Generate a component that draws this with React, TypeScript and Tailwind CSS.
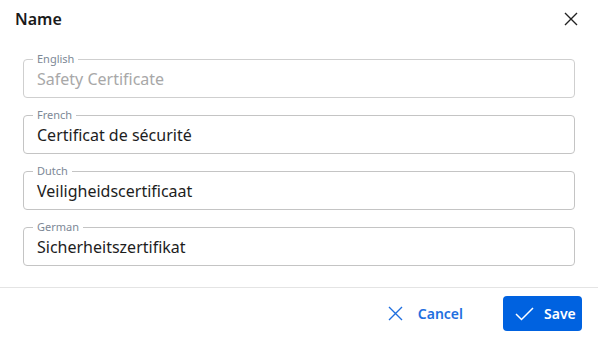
import React from "react";

const fields = [
  { label: "English", value: "Safety Certificate", disabled: true },
  { label: "French", value: "Certificat de sécurité" },
  { label: "Dutch", value: "Veiligheidscertificaat" },
  { label: "German", value: "Sicherheitszertifikat" },
];

function Field({ label, value, disabled }: { label: string; value: string; disabled?: boolean }) {
  return (
    <div
      className={`relative h-[39px] rounded-[4px] border flex items-center px-[13px] ${
        disabled ? "border-[#cfcfcf]" : "border-[#c4c4c4]"
      }`}
    >
      <span className="absolute left-[9px] top-[-8px] bg-white px-[4px] text-[11px] leading-[14px] text-[#7d8896]">
        {label}
      </span>
      <span className={`text-[16px] leading-[20px] pt-[1px] ${disabled ? "text-[#a8a8a8]" : "text-[#1d1d1d]"}`}>
        {value}
      </span>
    </div>
  );
}

export default function App() {
  return (
    <div
      className="w-[598px] h-[340px] bg-white flex flex-col"
      style={{ fontFamily: "'Noto Sans', Roboto, sans-serif" }}
    >
      <div className="h-[38px] flex items-center justify-between pl-[15px] pr-[20px]">
        <span className="text-[16px] font-semibold text-[#1a1a1a]">Name</span>
        <svg width="14" height="14" viewBox="0 0 14 14" className="text-[#222]">
          <path d="M1 1L13 13M13 1L1 13" stroke="currentColor" strokeWidth="1.4" fill="none" />
        </svg>
      </div>
      <div className="flex flex-col gap-[17px] px-[23px] pt-[21px] pb-[21px]">
        {fields.map((f) => (
          <Field key={f.label} {...f} />
        ))}
      </div>
      <div className="border-t border-[#e4e4e4]" />
      <div className="flex items-center justify-end gap-[40px] pr-[16px] pt-[8px]">
        <button className="flex items-center gap-[15px] text-[#1f6fdf] font-semibold text-[14px]">
          <svg width="15" height="15" viewBox="0 0 15 15">
            <path d="M1 1L14 14M14 1L1 14" stroke="currentColor" strokeWidth="1.4" fill="none" />
          </svg>
          Cancel
        </button>
        <button className="flex items-center gap-[10px] bg-[#0062e0] text-white font-semibold text-[14px] rounded-[4px] h-[35px] w-[79px] pl-[12px]">
          <svg width="19" height="14" viewBox="0 0 19 14">
            <path d="M1 7L6.5 12.5L18 1" stroke="currentColor" strokeWidth="1.5" fill="none" />
          </svg>
          Save
        </button>
      </div>
    </div>
  );
}
